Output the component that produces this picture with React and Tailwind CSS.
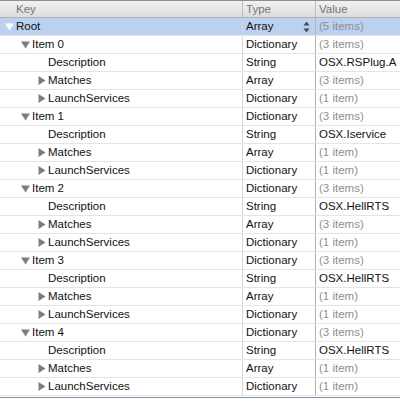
import React from "react";

const items = [
  { value: "OSX.RSPlug.A", matches: "(3 items)" },
  { value: "OSX.Iservice", matches: "(1 item)" },
  { value: "OSX.HellRTS", matches: "(3 items)" },
  { value: "OSX.HellRTS", matches: "(1 item)" },
  { value: "OSX.HellRTS", matches: "(1 item)" },
];

const rows = [
  { key: "Root", level: 0, toggle: "open", type: "Array", value: "(5 items)", muted: true, selected: true },
];
items.forEach((it, i) => {
  rows.push({ key: `Item ${i}`, level: 1, toggle: "open", type: "Dictionary", value: "(3 items)", muted: true });
  rows.push({ key: "Description", level: 2, toggle: null, type: "String", value: it.value });
  rows.push({ key: "Matches", level: 2, toggle: "closed", type: "Array", value: it.matches, muted: true });
  rows.push({ key: "LaunchServices", level: 2, toggle: "closed", type: "Dictionary", value: "(1 item)", muted: true });
});

const Triangle = ({ open, white }) => {
  const fill = white ? "#ffffff" : "#7d7d7d";
  return open ? (
    <svg width="9" height="9" viewBox="0 0 9 9" className="shrink-0">
      <polygon points="0,1.5 9,1.5 4.5,8.5" fill={fill} />
    </svg>
  ) : (
    <svg width="9" height="9" viewBox="0 0 9 9" className="shrink-0">
      <polygon points="1.5,0 8.5,4.5 1.5,9" fill={fill} />
    </svg>
  );
};

const Stepper = () => (
  <svg width="7" height="12" viewBox="0 0 7 12" className="shrink-0 mr-[5px]">
    <polygon points="3.5,0.5 6.5,4.5 0.5,4.5" fill="#4a4a4a" />
    <polygon points="0.5,7.5 6.5,7.5 3.5,11.5" fill="#4a4a4a" />
  </svg>
);

const Row = ({ row }) => (
  <div
    className={`flex h-[18px] border-b border-[#e4e4e4] ${
      row.selected ? "bg-[#bad1f0]" : "bg-white"
    }`}
  >
    <div className="w-[242px] flex items-center" style={{ paddingLeft: row.level * 16 + 5 }}>
      <div className="w-[11px] flex items-center">
        {row.toggle && <Triangle open={row.toggle === "open"} white={row.selected} />}
      </div>
      <span className="text-[#111]">{row.key}</span>
    </div>
    <div className="w-[73px] flex items-center justify-between border-l border-[#d6d6d6] pl-[3px]">
      <span className="text-[#111]">{row.type}</span>
      {row.selected && <Stepper />}
    </div>
    <div className="flex-1 flex items-center border-l border-[#b4b4b4] pl-[3px] overflow-hidden whitespace-nowrap">
      <span className={row.muted ? "text-[#8e8e8e]" : "text-[#111]"}>{row.value}</span>
    </div>
  </div>
);

export default function App() {
  return (
    <div
      className="w-[400px] h-[401px] bg-white overflow-hidden text-[11.5px] leading-[17px]"
      style={{ fontFamily: '"Liberation Sans", Arial, sans-serif' }}
    >
      <div className="flex h-[18px] border-t border-[#8e8e8e] border-b border-b-[#b0b0b0] bg-gradient-to-b from-[#f2f2f2] to-[#dcdcdc] text-[#767676]">
        <div className="w-[242px] pl-[16px] flex items-center">Key</div>
        <div className="w-[73px] pl-[3px] flex items-center border-l border-[#bdbdbd]">Type</div>
        <div className="flex-1 pl-[3px] flex items-center border-l border-[#bdbdbd]">Value</div>
      </div>
      {rows.map((row, i) => (
        <Row key={i} row={row} />
      ))}
      <div className="h-[1px] bg-white" />
      <div className="h-[1px] bg-[#7d8ea6]" />
    </div>
  );
}
